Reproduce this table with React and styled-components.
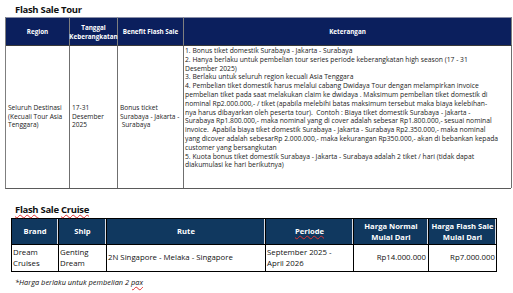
import React from 'react';
import styled, { createGlobalStyle } from 'styled-components';

const GlobalStyle = createGlobalStyle`
  html, body {
    margin: 0;
    padding: 0;
    background: #ffffff;
  }
  body {
    font-family: "Open Sans", "Liberation Sans", sans-serif;
    color: #111;
  }
`;

const Page = styled.div`
  width: 513px;
  height: 293px;
  padding: 3px 0 0 5px;
  box-sizing: border-box;
  overflow: hidden;
`;

const Title = styled.div`
  font-weight: 700;
  font-size: 9.5px;
  letter-spacing: -0.3px;
  line-height: 13px;
  margin-left: 10px;
  height: 14px;
`;

const Squiggle = styled.span`
  text-decoration: underline wavy #e03030;
  text-decoration-thickness: 1px;
  text-underline-offset: 1px;
`;

/* ---- tour table ---- */
const TourGrid = styled.div`
  display: grid;
  grid-template-columns: 64px 48px 66px 328px;
  grid-template-rows: 29px 142px;
  width: 506px;
  border-left: 1px solid #7f7f7f;
  border-bottom: 1px solid #5a5a5a;
  box-sizing: border-box;
`;

const TourHead = styled.div`
  background: #0b1f5d;
  color: #fff;
  font-weight: 700;
  font-size: 6.3px;
  line-height: 9px;
  display: flex;
  align-items: center;
  justify-content: center;
  text-align: center;
  border-right: 1px solid #7f7f7f;
  border-top: 1px solid #8a8fa8;
  border-bottom: 1px solid #3a3a3a;
`;

const TourCell = styled.div`
  font-size: ${p => (p.$top ? '6.75px' : '6.6px')};
  line-height: 8.8px;
  color: #222;
  display: flex;
  flex-direction: column;
  justify-content: ${p => (p.$top ? 'flex-start' : 'center')};
  padding: ${p => (p.$top ? '1px 0 0 1px' : '0 0 0 2px')};
  border-right: 1px solid #6f6f6f;
  overflow: hidden;
  white-space: pre;
`;

const Line = styled.div`
  white-space: pre;
`;

/* ---- cruise table ---- */
const CruiseTitle = styled(Title)`
  margin-top: 14px;
  height: 15px;
`;

const CruiseGrid = styled.div`
  display: grid;
  grid-template-columns: 47px 48px 159px 88px 75px 68px;
  grid-template-rows: 26px 26px;
  width: 486px;
  margin-left: 6px;
  border: 1px solid #000;
  box-sizing: border-box;
`;

const CruiseHead = styled.div`
  background: #10385f;
  color: #fff;
  font-weight: 700;
  font-size: 7.6px;
  line-height: 11px;
  display: flex;
  align-items: center;
  justify-content: center;
  text-align: center;
  border-right: 1px solid #000;
  border-bottom: 1px solid #000;
  box-shadow: inset -1px 0 0 #d8dde6;
  &:last-child { border-right: none; box-shadow: none; }
`;

const CruiseCell = styled.div`
  font-size: 7.8px;
  line-height: 11.5px;
  color: #111;
  display: flex;
  flex-direction: column;
  justify-content: center;
  align-items: ${p => (p.$right ? 'flex-end' : 'flex-start')};
  padding: ${p => (p.$right ? '0 2px 0 0' : '0 0 0 1px')};
  border-right: 1px solid #000;
  white-space: nowrap;
  &:last-child { border-right: none; }
`;

const Note = styled.div`
  font-style: italic;
  font-size: 7.4px;
  line-height: 10px;
  margin: 5px 0 0 10px;
  color: #111;
`;

const keterangan = [
  '1. Bonus tiket domestik Surabaya - Jakarta - Surabaya',
  '2. Hanya berlaku untuk pembelian tour series periode keberangkatan high season (17 - 31',
  'Desember 2025)',
  '3. Berlaku untuk seluruh region kecuali Asia Tenggara',
  '4. Pembelian tiket domestik harus melalui cabang Dwidaya Tour dengan melampirkan invoice',
  'pembelian tiket pada saat melakukan claim ke dwidaya . Maksimum pembelian tiket domestik di',
  'nominal Rp2.000.000,- / tiket (apabila melebihi batas maksimum tersebut maka biaya kelebihan-',
  'nya harus dibayarkan oleh peserta tour).  Contoh : Biaya tiket domestik Surabaya - Jakarta -',
  'Surabaya Rp1.800.000,- maka nominal yang di cover adalah sebesar Rp1.800.000,- sesuai nominal',
  'invoice.  Apabila biaya tiket domestik Surabaya - Jakarta - Surabaya Rp2.350.000,- maka nominal',
  'yang dicover adalah sebesarRp 2.000.000,- maka kekurangan Rp350.000,- akan di bebankan kepada',
  'customer yang bersangkutan',
  '5. Kuota bonus tiket domestik Surabaya - Jakarta - Surabaya adalah 2 tiket / hari (tidak dapat',
  'diakumulasi ke hari berikutnya)',
];

const lines = arr => arr.map((t, i) => <Line key={i}>{t}</Line>);

export default function App() {
  return (
    <>
      <GlobalStyle />
      <Page>
        <Title>Flash Sale Tour</Title>
        <TourGrid>
          <TourHead>Region</TourHead>
          <TourHead>Tanggal<br />Keberangkatan</TourHead>
          <TourHead>Benefit Flash Sale</TourHead>
          <TourHead>Keterangan</TourHead>

          <TourCell>{lines(['Seluruh Destinasi', '(Kecuali Tour Asia', 'Tenggara)'])}</TourCell>
          <TourCell>{lines(['17-31', 'Desember', '2025'])}</TourCell>
          <TourCell>{lines(['Bonus ticket', 'Surabaya - Jakarta -', ' Surabaya'])}</TourCell>
          <TourCell $top>{lines(keterangan)}</TourCell>
        </TourGrid>

        <CruiseTitle>
          <Squiggle>Flash</Squiggle> Sale <Squiggle>Cruise</Squiggle>
        </CruiseTitle>
        <CruiseGrid>
          <CruiseHead>Brand</CruiseHead>
          <CruiseHead>Ship</CruiseHead>
          <CruiseHead>Rute</CruiseHead>
          <CruiseHead><Squiggle>Periode</Squiggle></CruiseHead>
          <CruiseHead>Harga Normal<br />Mulai Dari</CruiseHead>
          <CruiseHead>Harga Flash Sale<br />Mulai Dari</CruiseHead>

          <CruiseCell>{lines(['Dream', 'Cruises'])}</CruiseCell>
          <CruiseCell>{lines(['Genting', 'Dream'])}</CruiseCell>
          <CruiseCell>2N Singapore - Melaka - Singapore</CruiseCell>
          <CruiseCell>{lines(['September 2025 -', 'April 2026'])}</CruiseCell>
          <CruiseCell $right>Rp14.000.000</CruiseCell>
          <CruiseCell $right>Rp7.000.000</CruiseCell>
        </CruiseGrid>
        <Note>*Harga berlaku untuk pembelian 2 <Squiggle>pax</Squiggle></Note>
      </Page>
    </>
  );
}
